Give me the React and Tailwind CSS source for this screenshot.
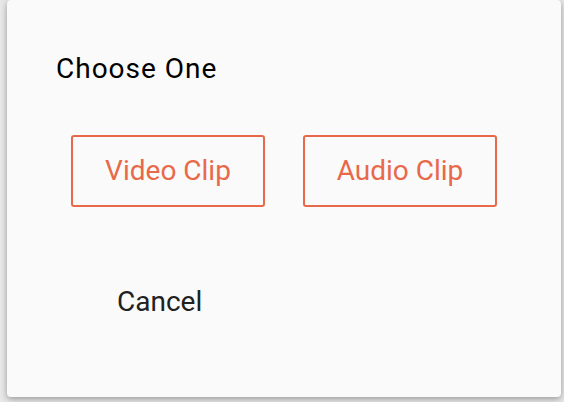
export default function App() {
  return (
    <div className="w-[564px] h-[402px] bg-[#e8e8e8] overflow-hidden" style={{ fontFamily: "Roboto, 'Noto Sans', sans-serif" }}>
      <div className="ml-[7px] w-[554px] h-[397px] bg-[#fafafa] rounded-[4px] shadow-[0_2px_6px_rgba(0,0,0,0.35)] flex flex-col">
        <div className="pt-[53px] pl-[49px] text-[28px] leading-[32px] tracking-[1px] text-black">Choose One</div>
        <div className="mt-[50px] pl-[64px] flex gap-[38px]">
          <button className="w-[194px] h-[72px] border-2 border-[#e8694a] rounded-[3px] text-[#e8694a] text-[28px] leading-[32px] flex items-center justify-center">
            Video Clip
          </button>
          <button className="w-[194px] h-[72px] border-2 border-[#e8694a] rounded-[3px] text-[#e8694a] text-[28px] leading-[32px] flex items-center justify-center">
            Audio Clip
          </button>
        </div>
        <div className="mt-[79px] pl-[110px] text-[28px] leading-[32px] text-[#212121]">Cancel</div>
      </div>
    </div>
  );
}
